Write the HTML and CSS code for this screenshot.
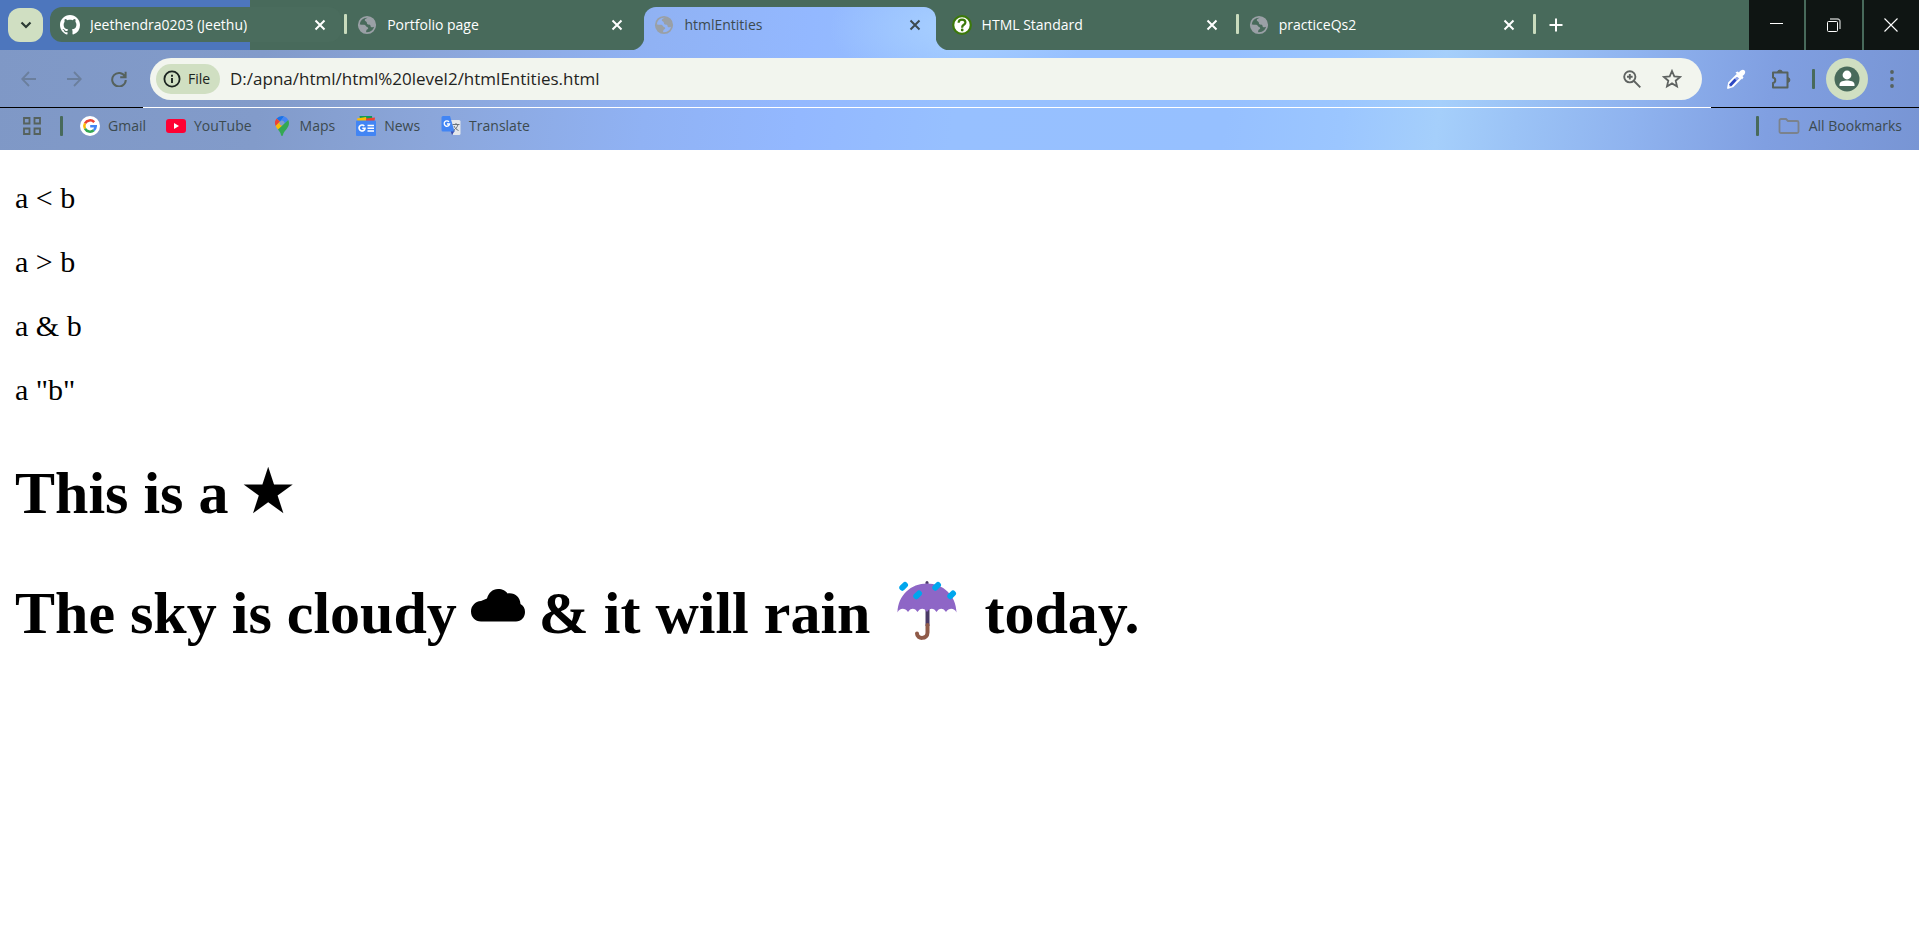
FILE: index.html
```html
<!DOCTYPE html>
<html lang="en">
<head>
<meta charset="utf-8">
<title>htmlEntities</title>
<link rel="stylesheet" href="styles.css">
</head>
<body>
<svg class="defs" aria-hidden="true">
  <symbol id="close" viewBox="0 0 12 12"><path d="M1.500 1.500l9 9m0-9l-9 9" stroke="currentColor" stroke-width="2" fill="none"/></symbol>
  <symbol id="globe" viewBox="0 0 20 20"><circle cx="10" cy="10" r="8.200" fill="none" stroke="#9aa0a6" stroke-width="1.800"/><path d="M11 2.200c-.8 1-2.800 1.200-3.200 2.600-.2 1 .8 1.400 1.500 1.900.9.600.3 1.800 1.200 2.500.8.600 2.200.2 2.800 1 .6.900 0 1.800 1.200 2.100 1.300.3 2-.6 3.500-.8C18.500 7 16 2.500 11 2.200zM2 9.500c1.500 0 3.800.3 5.200.3 1.300.1 1.500 1.200 2.300 1.900.7.500 1.700.5 1.700 1.500 0 .9-1.200 1-1.700 1.700-.5.800 0 2-1 2.700C4.500 17 1.700 14 2 9.500z" fill="#9aa0a6"/></symbol>
</svg>
<header class="browser">
  <div class="strip">
    <button class="tab-search" aria-label="Search tabs"><svg width="12" height="8" viewBox="0 0 12 8"><path d="M1.500 1.500L6 6l4.500-4.500" fill="none" stroke="#2b3a33" stroke-width="2.200"/></svg></button>
    <div class="tabs" role="tablist">
      <div class="tab hovered" role="tab">
        <svg class="favicon" viewBox="0 0 16 16"><path fill="#fff" d="M8 0C3.580 0 0 3.580 0 8c0 3.540 2.290 6.530 5.470 7.590.4.070.55-.17.55-.38 0-.19-.01-.82-.01-1.490-2.010.37-2.530-.49-2.690-.94-.09-.23-.48-.94-.82-1.130-.28-.15-.68-.52-.01-.53.63-.01 1.080.58 1.230.82.72 1.210 1.870.87 2.330.66.070-.52.28-.87.51-1.070-1.780-.2-3.640-.89-3.640-3.950 0-.87.31-1.590.82-2.150-.08-.2-.36-1.020.08-2.120 0 0 .67-.21 2.200.82.64-.18 1.320-.27 2-.27s1.360.09 2 .27c1.530-1.040 2.200-.82 2.200-.82.44 1.100.16 1.920.08 2.120.51.56.82 1.270.82 2.150 0 3.070-1.870 3.750-3.650 3.950.29.25.54.73.54 1.480 0 1.070-.01 1.930-.01 2.200 0 .21.15.46.55.38A8.010 8.010 0 0016 8c0-4.420-3.580-8-8-8z"/></svg>
        <span class="title">Jeethendra0203 (Jeethu)</span>
        <button class="close" aria-label="Close tab"><svg><use href="#close"/></svg></button>
      </div>
      <div class="tab" role="tab">
        <svg class="favicon"><use href="#globe"/></svg>
        <span class="title">Portfolio page</span>
        <button class="close" aria-label="Close tab"><svg><use href="#close"/></svg></button>
      </div>
      <div class="tab active" role="tab" aria-selected="true">
        <svg class="favicon"><use href="#globe"/></svg>
        <span class="title">htmlEntities</span>
        <button class="close" aria-label="Close tab"><svg><use href="#close"/></svg></button>
      </div>
      <div class="tab" role="tab">
        <svg class="favicon" viewBox="0 0 20 20"><circle cx="10" cy="10" r="8.800" fill="#fff" stroke="#3c790a" stroke-width="2.200"/><path d="M6.600 7.700C6.700 5.600 8.200 4.700 10 4.700c2 0 3.400 1 3.400 2.700 0 2.300-3.200 2.400-3.200 4.600v.8" fill="none" stroke="#3c790a" stroke-width="2.200"/><circle cx="10.200" cy="15" r="1.400" fill="#3c790a"/></svg>
        <span class="title">HTML Standard</span>
        <button class="close" aria-label="Close tab"><svg><use href="#close"/></svg></button>
      </div>
      <div class="tab" role="tab">
        <svg class="favicon"><use href="#globe"/></svg>
        <span class="title">practiceQs2</span>
        <button class="close" aria-label="Close tab"><svg><use href="#close"/></svg></button>
      </div>
    </div>
    <button class="new-tab" aria-label="New tab"><svg width="14" height="14" viewBox="0 0 14 14"><path d="M7 .5v13M.5 7h13" stroke="#fff" stroke-width="2"/></svg></button>
    <div class="window-controls">
      <button aria-label="Minimize"><svg width="14" height="14" viewBox="0 0 14 14"><path d="M0 5.500h13" stroke="#fff"/></svg></button>
      <button aria-label="Restore"><svg width="14" height="14" viewBox="0 0 14 14" fill="none" stroke="#fff"><path d="M3 1h7.500a2.500 2.500 0 0 1 2.500 2.500V11" stroke="#b5b8b7" stroke-width="1.400"/><rect x=".5" y="3.500" width="10" height="10" rx="1"/></svg></button>
      <button aria-label="Close"><svg width="14" height="14" viewBox="0 0 14 14"><path d="M.5 .5l13 13m0-13l-13 13" stroke="#fff" stroke-width="1.100"/></svg></button>
    </div>
  </div>

  <div class="toolbar">
    <nav class="nav">
      <button class="dim" aria-label="Back"><svg width="16" height="16" viewBox="0 0 16 16"><path d="M15 8H1.500M8 1L1.200 8 8 15" fill="none" stroke="currentColor" stroke-width="1.800"/></svg></button>
      <button class="dim" aria-label="Forward"><svg width="16" height="16" viewBox="0 0 16 16"><path d="M1 8h13.500M8 1l6.800 7L8 15" fill="none" stroke="currentColor" stroke-width="1.800"/></svg></button>
      <button aria-label="Reload"><svg width="16" height="16" viewBox="0 0 16 16"><path d="M14 5.500A6.800 6.800 0 1 0 14.800 9M14.600 .8v5.400H9.200" fill="none" stroke="currentColor" stroke-width="2"/></svg></button>
    </nav>
    <div class="omnibox">
      <button class="chip"><svg width="18" height="18" viewBox="0 0 18 18"><circle cx="9" cy="9" r="7.600" fill="none" stroke="currentColor" stroke-width="1.800"/><path d="M9 8v5M9 4.700v2" stroke="currentColor" stroke-width="1.900"/></svg>File</button>
      <input class="url" type="text" aria-label="Address" value="D:/apna/html/html%20level2/htmlEntities.html">
      <button aria-label="Zoom"><svg width="18" height="18" viewBox="0 0 18 18"><g fill="none" stroke="#5f6361" stroke-width="1.900"><circle cx="6.800" cy="6.800" r="5.600"/><path d="M11 11l6.300 6.300M6.800 4v5.600M4 6.800h5.600"/></g></svg></button>
      <button aria-label="Bookmark this tab"><svg width="20" height="20" viewBox="0 0 20 20"><path d="M10 2l2.300 5.400 5.800.5-4.400 3.800 1.300 5.700-5-3-5 3 1.300-5.700L1.900 7.900l5.800-.5z" fill="none" stroke="#5f6361" stroke-width="1.800"/></svg></button>
    </div>
    <div class="actions">
      <button aria-label="Color picker"><svg width="20" height="20" viewBox="0 0 20 20"><path d="M2 19l1-5 8-8 3.500 3.500-8 8z" fill="#8fa3e8" stroke="#fff" stroke-width="1.800" stroke-linejoin="round"/><path d="M4 16.500l5.500-6" stroke="#2d47c2" stroke-width="2.600"/><path d="M9.500 3.500l2-1 1.500 1C14.500 1 17 0 18.600 1.400 20 3 19 5.500 16.500 7l1 1.500-1.500 2z" fill="#fff"/></svg></button>
      <button class="extensions" aria-label="Extensions"><svg width="22" height="22" viewBox="0 0 22 22"><path d="M3 4.500h14.500v15H3v-4.500c3-.6 3-5 0-5.600z" fill="none" stroke="currentColor" stroke-width="2" stroke-linejoin="round"/><path d="M7.500 4.500a2.400 2.400 0 0 1 4.800 0zM17.500 9.600a2.400 2.400 0 0 1 0 4.800z" fill="currentColor" stroke="currentColor"/></svg></button>
      <span class="divider"></span>
      <button class="avatar" aria-label="Profile"><svg width="26" height="26" viewBox="0 0 26 26"><circle cx="13" cy="13" r="12.500" fill="#486a5b"/><circle cx="13" cy="9" r="4.400" fill="#fff"/><path d="M5.500 20v-1.500c0-3.200 4.500-4 7.500-4s7.500.8 7.500 4V20z" fill="#fff"/></svg></button>
      <button class="menu" aria-label="Menu"><svg width="4" height="18" viewBox="0 0 4 18" fill="currentColor"><circle cx="2" cy="2" r="1.900"/><circle cx="2" cy="9" r="1.900"/><circle cx="2" cy="16" r="1.900"/></svg></button>
    </div>
  </div>

  <div class="rule"></div>

  <nav class="bookmarks">
    <button class="apps" aria-label="Apps"><svg width="18" height="18" viewBox="0 0 18 18" fill="none" stroke="currentColor" stroke-width="1.800"><path d="M1 1h5.500v5.500H1zM11.500 1H17v5.500h-5.500zM1 11.500h5.500V17H1zM11.500 11.500H17V17h-5.500z"/></svg></button>
    <span class="divider"></span>
    <a href="#"><svg width="20" height="20" viewBox="0 0 20 20"><circle cx="10" cy="10" r="10" fill="#fff"/><g fill="none" stroke-width="2.500"><path d="M14.200 6.200A5.700 5.700 0 0 0 5 7.300" stroke="#ea4335"/><path d="M5 7.300a5.700 5.700 0 0 0 0 5.400" stroke="#fbbc05"/><path d="M5 12.700a5.700 5.700 0 0 0 8.800 1.500" stroke="#34a853"/><path d="M13.800 14.200a5.700 5.700 0 0 0 1.900-3.900h-5.500" stroke="#4285f4"/></g></svg>Gmail</a>
    <a href="#"><svg width="20" height="20" viewBox="0 0 20 20"><rect y="3" width="20" height="14" rx="3" fill="#ff0033"/><path d="M8 7l5 3-5 3z" fill="#fff"/></svg>YouTube</a>
    <a href="#"><svg width="20" height="20" viewBox="0 0 20 20"><path d="M10 0a7 7 0 0 0-5.400 2.500L8 5.400 12.300.4A7 7 0 0 0 10 0z" fill="#1a73e8"/><path d="M4.600 2.500A7 7 0 0 0 3.700 10L8 5.400z" fill="#ea4335"/><path d="M12.300.4L8 5.400a2.700 2.700 0 0 1 4.100 3.500l4.200-5A7 7 0 0 0 12.300.4z" fill="#4285f4"/><path d="M3.700 10c.5 1.200 1.300 2.300 2.300 3.500l6-4.500A2.700 2.700 0 0 1 8 5.400z" fill="#fbbc04"/><path d="M16.300 3.900L6 13.500c1.600 2 2.600 3.400 3 5.400.2 1.400 1.800 1.400 2 0 .7-4.200 6-6.500 6-11.900 0-1.100-.3-2.200-.7-3.100z" fill="#34a853"/></svg>Maps</a>
    <a href="#"><svg width="20" height="20" viewBox="0 0 20 20"><path d="M3.500 0H16l.5 5h-12z" fill="#0f9d58"/><path d="M1 2.500l9-1.500 1 4H1.500z" fill="#fbbc04"/><path d="M10 2.500l9-1-.5 4H10z" fill="#ea4335"/><rect y="4.500" width="20" height="15.500" rx="1" fill="#4285f4"/><path d="M8.300 10A3 3 0 1 0 9 12.300H6.300" fill="none" stroke="#fff" stroke-width="1.600"/><path d="M11.500 9.500H18M11.500 12.300H18M11.500 15H18" stroke="#fff" stroke-width="1.500"/></svg>News</a>
    <a href="#"><svg width="20" height="20" viewBox="0 0 20 20"><path d="M8 4h10a1.500 1.500 0 0 1 1.500 1.500v12A1.500 1.500 0 0 1 18 19h-6z" fill="#e4e7eb"/><path d="M9.500 14.500H14L11 19z" fill="#3949ab"/><path d="M2 0h7l4.500 15.500H2A1.500 1.500 0 0 1 .5 14V1.500A1.500 1.500 0 0 1 2 0z" fill="#4285f4"/><path d="M8 5.800A2.700 2.700 0 1 0 8.600 8H6" fill="none" stroke="#fff" stroke-width="1.300"/><path d="M11.500 8.500h7M15 7v1.500M17 8.500c-.5 2.500-2.500 4.500-4.500 6M13 10c.8 2 2.500 3.500 4.500 4.500" fill="none" stroke="#68717a"/></svg>Translate</a>
    <span class="spacer"></span>
    <span class="divider"></span>
    <button class="all"><svg width="22" height="16" viewBox="0 0 22 16"><path d="M1.500 2.500A1.500 1.500 0 0 1 3 1h5l2 2h9a1.500 1.500 0 0 1 1.500 1.500v9A1.500 1.500 0 0 1 19 15H3a1.500 1.500 0 0 1-1.500-1.500z" fill="none" stroke="#7b828c" stroke-width="1.800"/></svg>All Bookmarks</button>
  </nav>
</header>

<main class="page">
  <p>a &lt; b</p>
  <p>a &gt; b</p>
  <p>a &amp; b</p>
  <p>a &quot;b&quot;</p>
  <h1>This is a <span class="star">&#9733;</span></h1>
  <h1>The sky is cloudy <svg class="cloud" role="img" aria-label="cloud" viewBox="0 0 54 33"><path d="M10 32.500C4 32.500 0 28 0 22.500 0 17 4 12.500 10 12l6-2.500C17.500 4 21.500 0 27 0c4.500 0 8 2 9.500 4.500 7.500-1 12.500 3.500 13 10.500 3 1.500 4.500 4.500 4.500 8 0 5.500-4 9.500-9 9.500z"/></svg> &amp; it will rain <svg class="umbrella" role="img" aria-label="umbrella with rain" viewBox="0 0 60 60"><rect x="28.500" width="3" height="8" rx="1.500" fill="#4a3a66"/><path d="M28.500 28h4v17h-4z" fill="#4a3a66"/><path d="M30.500 44v7.500c0 7-10.500 7-10.500 1" fill="none" stroke="#8f5a48" stroke-width="4" stroke-linecap="round"/><path d="M.5 31.500C1 14 14 2.500 30 2.500S59 14 59.500 31.500c-2-4.500-7.500-5-10.500-.5-2.500-4.500-7-4.500-9.500 0-2.500-4.500-7-4.500-9.500 0-2.500-4.500-7-4.500-9.500 0-2.500-4.500-7-4.500-9.500 0-3-4.500-8.500-4-10.500.5z" fill="#8e66c6"/><path d="M5.300 6.700L8 4M38.300 6.700L41 4M19.300 15.200l2.700-2.700M53.300 15.200l2.700-2.700" stroke="#00a6ed" stroke-width="6" stroke-linecap="round"/></svg> today.</h1>
</main>
</body>
</html>
```
FILE: styles.css
```css
* { box-sizing: border-box; }
body { margin: 0; background: #fff; color: #000; }
button { border: 0; padding: 0; background: none; color: inherit; font: inherit; display: flex; align-items: center; justify-content: center; }
svg { display: block; flex: none; }
.defs { position: absolute; width: 0; height: 0; }

.browser, .tab.active {
  background:
    radial-gradient(ellipse 130px 60px at 50% 28px, #a8d0ff, transparent) fixed,
    linear-gradient(97deg, #7f98c6 0%, #829bca 14%, #8ba6da 23%, #90b2f4 34%, #93b8ff 42%, #97c0ff 50%, #96c0ff 64%, #9bc6ff 70%, #a5cffb 75%, #9bc3f6 79%, #8fb3ef 85%, #809fe1 92%, #7895d4 100%) 0 0 / 100% 150px no-repeat fixed;
}
.browser { font: 14px/20px "Open Sans", "Noto Sans", sans-serif; color: #3c4a4f; }

.strip { display: flex; height: 50px; background: linear-gradient(90deg, #4d76bd 250px, #486a5b 250px); }
.tab-search { width: 35px; height: 34px; margin: 8px 7px 0 8px; border-radius: 12px; background: #d0dfc2; }
.tabs { flex: 0 1 1486px; display: grid; grid-template-columns: repeat(5, 1fr); padding-top: 7px; color: #fff; }
.tab { position: relative; display: flex; align-items: center; height: 35px; margin-right: 6px; padding: 0 15px 0 10px; border-radius: 12px; min-width: 0; }
.tab:not(.active):not(:nth-child(2))::after { content: ""; position: absolute; right: -6px; top: 7px; width: 3px; height: 20px; border-radius: 1px; background: #c9dbbd; }
.hovered { background: #4a6c5d; }
.favicon { width: 20px; height: 20px; margin-right: 10px; }
.title { flex: 1; padding-top: 1px; white-space: nowrap; overflow: hidden; }
.close svg { width: 12px; height: 12px; }
.tab.active { height: 43px; padding-bottom: 8px; border-radius: 12px 12px 0 0; color: #3c4a4f; }
.tab.active::before, .tab.active::after { content: ""; position: absolute; bottom: 0; width: 14px; height: 14px; }
.tab.active::before { left: -14px; background: radial-gradient(circle at 0 0, transparent 14px, #8fb1f2 15px); }
.tab.active::after { right: -14px; background: radial-gradient(circle at 100% 0, transparent 14px, #a3cbff 15px); }
.new-tab { width: 40px; }
.window-controls { display: grid; grid-template-columns: repeat(3, 1fr); gap: 2px; width: 170px; margin-left: auto; }
.window-controls button { background: #0f1513; }

.toolbar { display: flex; align-items: center; height: 57px; color: #56625d; }
.nav { display: flex; padding-left: 6px; width: 150px; }
.nav button { width: 45px; height: 44px; }
.nav .dim { color: #6b7f9d; }
.omnibox { flex: 1; display: flex; align-items: center; height: 42px; padding: 0 10px 0 6px; border-radius: 21px; background: #f2f5ee; }
.omnibox button { width: 40px; height: 40px; }
.omnibox .chip { width: 64px; height: 30px; gap: 7px; padding-right: 3px; border-radius: 15px; background: #d0dfc2; color: #1b2420; font-weight: 500; }
.url { flex: 1; min-width: 0; border: 0; padding: 0 10px; background: none; outline: 0; color: #1f2421; font: 17px/24px "Open Sans", "Noto Sans", sans-serif; }
.actions { display: flex; align-items: center; width: 217px; padding-left: 12px; }
.actions button { width: 44px; height: 42px; }
.actions .extensions { width: 46px; }
.actions .avatar { width: 42px; border-radius: 21px; background: #d0dfc2; margin-left: 11px; }
.actions .menu { width: 48px; }
.divider { width: 3px; height: 20px; border-radius: 1px; background: #486a5b; }
.actions .divider { margin-left: 8px; }

.rule { height: 1px; background: linear-gradient(90deg, #000 143px, #fff 143px calc(100% - 208px), #000 calc(100% - 208px)); }

.bookmarks { display: flex; align-items: center; height: 42px; padding: 0 17px 6px 23px; }
.bookmarks .apps { margin-right: 19px; color: #56625d; }
.bookmarks a { display: flex; align-items: center; gap: 8px; margin-left: 20px; color: inherit; text-decoration: none; }
.bookmarks .divider + a { margin-left: 17px; }
.bookmarks a:nth-of-type(n + 4) { margin-left: 21px; }
.spacer { flex: 1; }
.all { gap: 9px; margin-left: 19px; }

.page { padding: 31px 15px; font: 30px/34px "Liberation Serif", "Times New Roman", serif; }
.page p { margin: 0 0 30px; }
.page h1 { margin: 54px 0; font-size: 60px; line-height: 66px; }
.page p + h1 { margin-top: 52px; }
.star { font-family: "DejaVu Sans", sans-serif; font-size: 64px; font-weight: 400; line-height: 1; margin-left: -4px; }
.page svg { display: inline-block; }
.cloud { width: 54px; height: 33px; margin: 0 -1px; vertical-align: 11px; }
.umbrella { width: 60px; height: 60px; margin: 0 12px; vertical-align: -8px; }
```
